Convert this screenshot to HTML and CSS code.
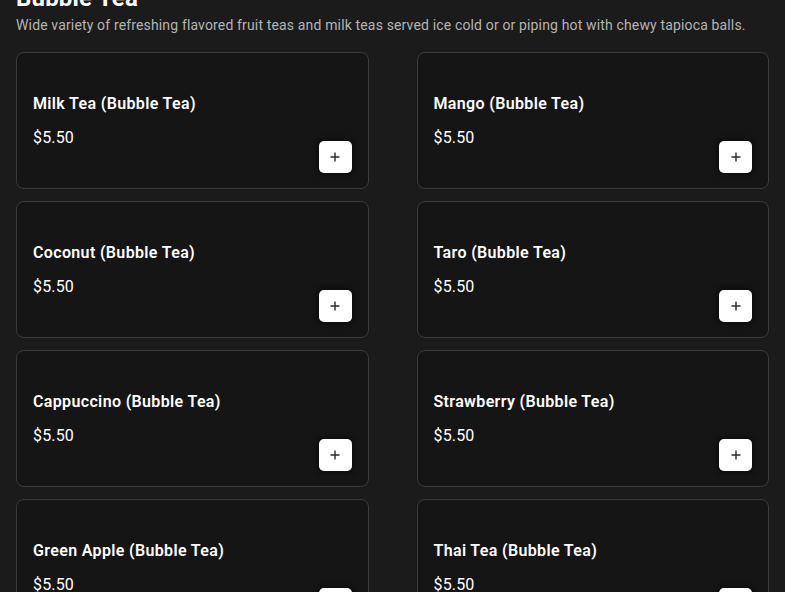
FILE: index.html
```html
<!DOCTYPE html>
<html lang="en">
<head>
<meta charset="utf-8">
<title>Bubble Tea</title>
<link rel="stylesheet" href="styles.css">
</head>
<body>
<main class="section">
  <h2 class="section-title">Bubble Tea</h2>
  <p class="section-desc">Wide variety of refreshing flavored fruit teas and milk teas served ice cold or or piping hot with chewy tapioca balls.</p>
  <div class="grid">
    <div class="card"><div class="info"><div class="name">Milk Tea (Bubble Tea)</div><div class="price">$5.50</div></div><button class="add" aria-label="Add"><svg width="10" height="10" viewBox="0 0 10 10"><path d="M5 0.5V9.5M0.5 5H9.5" stroke="#2a2a2a" stroke-width="1.4" fill="none"/></svg></button></div>
    <div class="card"><div class="info"><div class="name">Mango (Bubble Tea)</div><div class="price">$5.50</div></div><button class="add" aria-label="Add"><svg width="10" height="10" viewBox="0 0 10 10"><path d="M5 0.5V9.5M0.5 5H9.5" stroke="#2a2a2a" stroke-width="1.4" fill="none"/></svg></button></div>
    <div class="card"><div class="info"><div class="name">Coconut (Bubble Tea)</div><div class="price">$5.50</div></div><button class="add" aria-label="Add"><svg width="10" height="10" viewBox="0 0 10 10"><path d="M5 0.5V9.5M0.5 5H9.5" stroke="#2a2a2a" stroke-width="1.4" fill="none"/></svg></button></div>
    <div class="card"><div class="info"><div class="name">Taro (Bubble Tea)</div><div class="price">$5.50</div></div><button class="add" aria-label="Add"><svg width="10" height="10" viewBox="0 0 10 10"><path d="M5 0.5V9.5M0.5 5H9.5" stroke="#2a2a2a" stroke-width="1.4" fill="none"/></svg></button></div>
    <div class="card"><div class="info"><div class="name">Cappuccino (Bubble Tea)</div><div class="price">$5.50</div></div><button class="add" aria-label="Add"><svg width="10" height="10" viewBox="0 0 10 10"><path d="M5 0.5V9.5M0.5 5H9.5" stroke="#2a2a2a" stroke-width="1.4" fill="none"/></svg></button></div>
    <div class="card"><div class="info"><div class="name">Strawberry (Bubble Tea)</div><div class="price">$5.50</div></div><button class="add" aria-label="Add"><svg width="10" height="10" viewBox="0 0 10 10"><path d="M5 0.5V9.5M0.5 5H9.5" stroke="#2a2a2a" stroke-width="1.4" fill="none"/></svg></button></div>
    <div class="card"><div class="info"><div class="name">Green Apple (Bubble Tea)</div><div class="price">$5.50</div></div><button class="add" aria-label="Add"><svg width="10" height="10" viewBox="0 0 10 10"><path d="M5 0.5V9.5M0.5 5H9.5" stroke="#2a2a2a" stroke-width="1.4" fill="none"/></svg></button></div>
    <div class="card"><div class="info"><div class="name">Thai Tea (Bubble Tea)</div><div class="price">$5.50</div></div><button class="add" aria-label="Add"><svg width="10" height="10" viewBox="0 0 10 10"><path d="M5 0.5V9.5M0.5 5H9.5" stroke="#2a2a2a" stroke-width="1.4" fill="none"/></svg></button></div>
  </div>
</main>
</body>
</html>
```
FILE: styles.css
```css
html, body {
  margin: 0;
  padding: 0;
  background: #1b1b1b;
  overflow: hidden;
}
body {
  font-family: Roboto, "Liberation Sans", sans-serif;
  color: #ffffff;
}
.section {
  padding: 0 16px;
}
.section-title {
  margin: -18px 0 1px;
  font-size: 24px;
  line-height: 32px;
  font-weight: 700;
  letter-spacing: 0.2px;
}
.section-desc {
  margin: 0 0 17px;
  font-size: 14px;
  line-height: 20px;
  color: #b4b4b4;
  letter-spacing: 0.15px;
}
.grid {
  display: grid;
  grid-template-columns: 1fr 1fr;
  column-gap: 48px;
  row-gap: 12px;
}
.card {
  display: grid;
  grid-template-areas: "stack";
  height: 137px;
  box-sizing: border-box;
  padding: 16px;
  background: #151515;
  border: 1px solid #3b3b3b;
  border-radius: 8px;
}
.info {
  grid-area: stack;
  align-self: center;
  display: flex;
  flex-direction: column;
  gap: 10px;
}
.name {
  font-size: 16px;
  line-height: 24px;
  font-weight: 600;
  letter-spacing: 0.35px;
}
.price {
  font-size: 16px;
  line-height: 24px;
  letter-spacing: 0.15px;
}
.add {
  grid-area: stack;
  align-self: end;
  justify-self: end;
  width: 33px;
  height: 32px;
  margin-bottom: -1px;
  padding: 0;
  border: none;
  border-radius: 5px;
  background: #ffffff;
  display: flex;
  align-items: center;
  justify-content: center;
  box-shadow: 0 0 5px 2px rgba(0, 0, 0, 0.45);
}
```
